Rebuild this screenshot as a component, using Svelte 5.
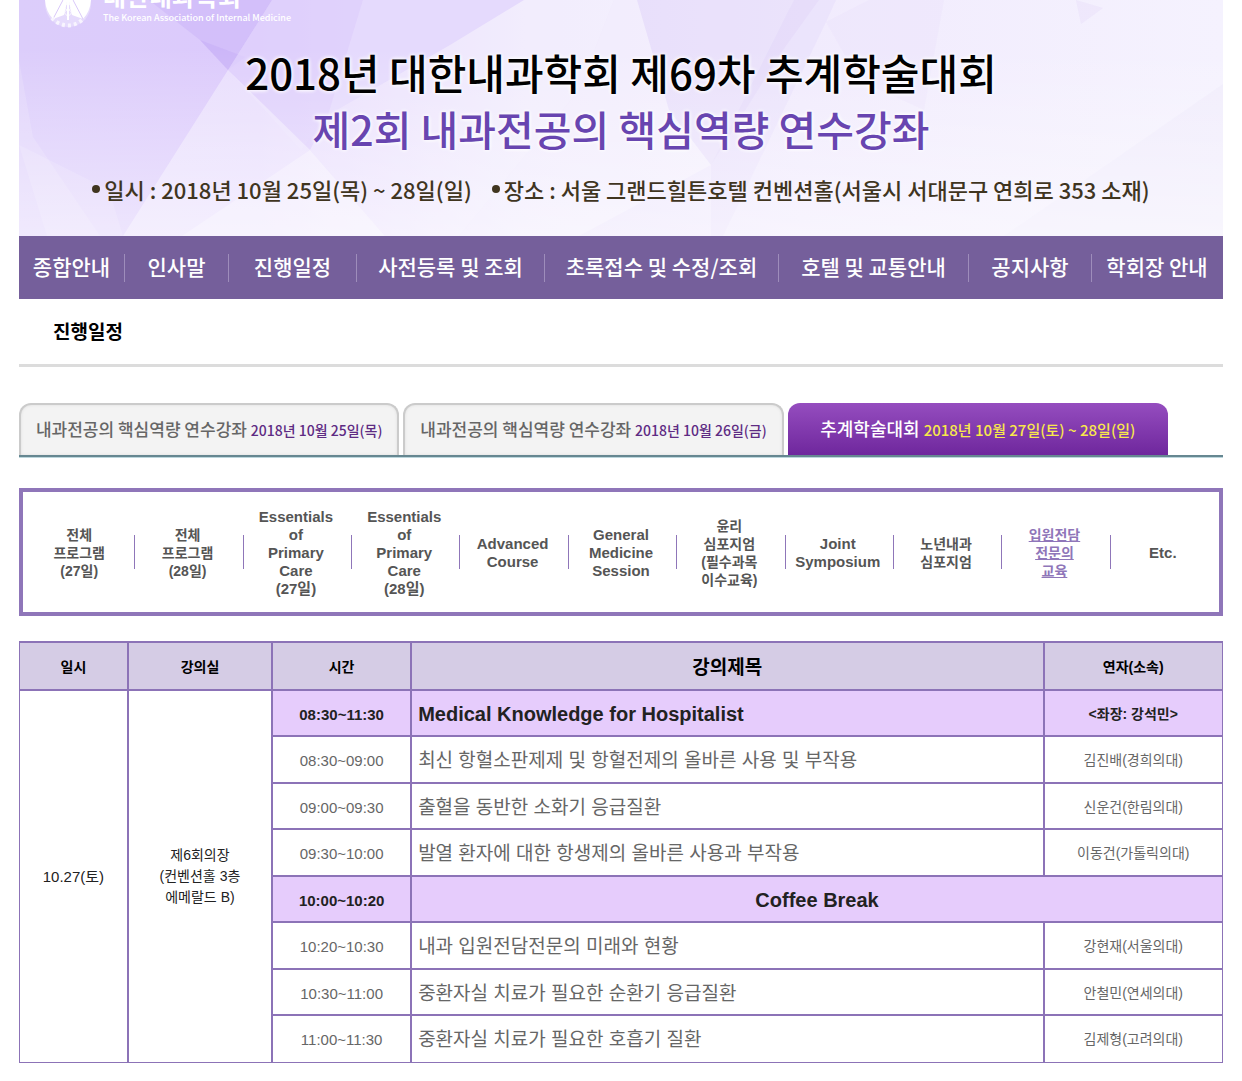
<script lang="ts">
  type Session = {
    time: string;
    title: string;
    speaker?: string;
    highlight?: boolean;
  };

  const menu = [
    '종합안내',
    '인사말',
    '진행일정',
    '사전등록 및 조회',
    '초록접수 및 수정/조회',
    '호텔 및 교통안내',
    '공지사항',
    '학회장 안내'
  ];

  const tabs = [
    { name: '내과전공의 핵심역량 연수강좌', date: '2018년 10월 25일(목)' },
    { name: '내과전공의 핵심역량 연수강좌', date: '2018년 10월 26일(금)' },
    { name: '추계학술대회', date: '2018년 10월 27일(토) ~ 28일(일)' }
  ];

  const programs = [
    { lines: ['전체', '프로그램', '(27일)'], korean: true },
    { lines: ['전체', '프로그램', '(28일)'], korean: true },
    { lines: ['Essentials', 'of', 'Primary', 'Care', '(27일)'] },
    { lines: ['Essentials', 'of', 'Primary', 'Care', '(28일)'] },
    { lines: ['Advanced', 'Course'] },
    { lines: ['General', 'Medicine', 'Session'] },
    { lines: ['윤리', '심포지엄', '(필수과목', '이수교육)'], korean: true },
    { lines: ['Joint', 'Symposium'] },
    { lines: ['노년내과', '심포지엄'], korean: true },
    { lines: ['입원전담', '전문의', '교육'], korean: true },
    { lines: ['Etc.'] }
  ];

  const sessions: Session[] = [
    { time: '08:30~11:30', title: 'Medical Knowledge for Hospitalist', speaker: '<좌장: 강석민>', highlight: true },
    { time: '08:30~09:00', title: '최신 항혈소판제제 및 항혈전제의 올바른 사용 및 부작용', speaker: '김진배(경희의대)' },
    { time: '09:00~09:30', title: '출혈을 동반한 소화기 응급질환', speaker: '신운건(한림의대)' },
    { time: '09:30~10:00', title: '발열 환자에 대한 항생제의 올바른 사용과 부작용', speaker: '이동건(가톨릭의대)' },
    { time: '10:00~10:20', title: 'Coffee Break', highlight: true },
    { time: '10:20~10:30', title: '내과 입원전담전문의 미래와 현황', speaker: '강현재(서울의대)' },
    { time: '10:30~11:00', title: '중환자실 치료가 필요한 순환기 응급질환', speaker: '안철민(연세의대)' },
    { time: '11:00~11:30', title: '중환자실 치료가 필요한 호흡기 질환', speaker: '김제형(고려의대)' }
  ];

  let activeTab = $state(2);
  let activeProgram = $state(9);
</script>

<div class="page">
  <header class="banner">
    <svg class="backdrop" viewBox="0 0 1204 236" preserveAspectRatio="none" aria-hidden="true">
      <defs>
        <linearGradient id="side" x1="0" y1="0" x2="1" y2="0">
          <stop offset="0" stop-color="#dccdfb" />
          <stop offset="0.2" stop-color="#dccafc" />
          <stop offset="0.42" stop-color="#ebe3fc" />
          <stop offset="0.65" stop-color="#f1ebfd" />
          <stop offset="1" stop-color="#f5f2fe" />
        </linearGradient>
        <linearGradient id="fade" x1="0" y1="0" x2="0" y2="1">
          <stop offset="0.2" stop-color="#fff" stop-opacity="0" />
          <stop offset="1" stop-color="#fff" stop-opacity="0.5" />
        </linearGradient>
      </defs>
      <rect width="1204" height="236" fill="url(#side)" />
      <path d="M130 0H253L209 70L181 40Z" fill="#c9b3f7" opacity="0.5" />
      <path d="M181 40L226 57L209 70Z" fill="#bca3f5" opacity="0.3" />
      <path d="M253 0H344L309 115L282 150L209 70Z" fill="#e0d1fc" opacity="0.7" />
      <path d="M344 0H505L431 45L309 115Z" fill="#e5dafd" />
      <path d="M209 70L104 236H366L291 150Z" fill="#fff" opacity="0.38" />
      <path d="M291 150L163 236H366Z" fill="#fff" opacity="0.3" />
      <path d="M309 115L431 45L505 0H595L560 90L440 236H366L291 150Z" fill="#fff" opacity="0.35" />
      <path d="M618 0H800L764 50L692 165L650 110Z" fill="#dfd0fa" opacity="0.3" />
      <path d="M595 0H618L650 110L692 165L560 236H440L560 90Z" fill="#fff" opacity="0.3" />
      <path d="M775 0H817L807 22L704 236H692V165Z" fill="#d6c7f8" opacity="0.2" />
      <path d="M807 22L850 0H925L905 110L840 80Z" fill="#e6dafc" opacity="0.25" />
      <path d="M1057 0L1084 8L1062 24Z" fill="#dfd1f8" opacity="0.25" />
      <path d="M1204 84L985 236H1204Z" fill="#ebe5fb" opacity="0.4" />
      <path d="M0 60L14 137L81 236H0Z" fill="#fff" opacity="0.15" />
      <path d="M0 145L90 190L104 236H28Z" fill="#fff" opacity="0.15" />
      <rect width="1204" height="236" fill="url(#fade)" />
    </svg>

    <div class="society">
      <svg class="emblem" viewBox="0 0 48 48" aria-hidden="true">
        <circle cx="24" cy="24" r="23" fill="#fff" opacity="0.3" />
        <path d="M1 20Q2 32 9 39L20 35L23 22V2Q5 4 1 20Z" fill="#fff" />
        <path d="M47 20Q46 32 39 39L28 35L25 22V2Q43 4 47 20Z" fill="#fff" />
        <path d="M9 39L19 20M39 39L29 20" stroke="#d9c8f9" fill="none" />
        <path d="M24 5V40" stroke="#fff" stroke-width="2" />
        <path
          d="M24 18C18 19 19 23 24 24S29 29 24 30S20 34 24 36M24 18C30 19 29 23 24 24S19 29 24 30S28 34 24 36"
          stroke="#fff"
          fill="none"
        />
        <path
          d="M8 38A21 21 0 0 0 40 38"
          stroke="#fff"
          stroke-width="4"
          stroke-dasharray="3 3"
          fill="none"
          opacity="0.7"
        />
      </svg>
      <div>
        <strong>대한내과학회</strong>
        <span>The Korean Association of Internal Medicine</span>
      </div>
    </div>

    <h1>2018년 대한내과학회 제69차 추계학술대회</h1>
    <p class="subtitle">제2회 내과전공의 핵심역량 연수강좌</p>
    <ul class="facts">
      <li>일시 : 2018년 10월 25일(목) ~ 28일(일)</li>
      <li>장소 : 서울 그랜드힐튼호텔 컨벤션홀(서울시 서대문구 연희로 353 소재)</li>
    </ul>
  </header>

  <nav class="menu">
    {#each menu as item, i}
      <a href="#menu-{i + 1}">{item}</a>
    {/each}
  </nav>

  <main>
    <h2>진행일정</h2>

    <div class="tabs">
      {#each tabs as tab, i}
        <button type="button" class:active={activeTab === i} onclick={() => (activeTab = i)}>
          {tab.name} <span>{tab.date}</span>
        </button>
      {/each}
    </div>

    <nav class="programs">
      {#each programs as program, i}
        <a
          href="#program-{i + 1}"
          class:korean={program.korean}
          class:current={activeProgram === i}
          onclick={() => (activeProgram = i)}
        >
          <span>
            {#each program.lines as line, n}{#if n > 0}<br />{/if}{line}{/each}
          </span>
        </a>
      {/each}
    </nav>

    <table>
      <colgroup>
        <col class="col-date" />
        <col class="col-room" />
        <col class="col-time" />
        <col />
        <col class="col-speaker" />
      </colgroup>
      <thead>
        <tr>
          <th>일시</th>
          <th>강의실</th>
          <th>시간</th>
          <th class="wide">강의제목</th>
          <th>연자(소속)</th>
        </tr>
      </thead>
      <tbody>
        {#each sessions as session, i}
          <tr class:highlight={session.highlight}>
            {#if i === 0}
              <td class="date" rowspan={sessions.length}>10.27(토)</td>
              <td class="room" rowspan={sessions.length}>제6회의장<br />(컨벤션홀 3층<br />에메랄드 B)</td>
            {/if}
            <td class="time">{session.time}</td>
            {#if session.speaker}
              <td class="title">{session.title}</td>
              <td class="speaker">{session.speaker}</td>
            {:else}
              <td class="title break" colspan="2">{session.title}</td>
            {/if}
          </tr>
        {/each}
      </tbody>
    </table>
  </main>
</div>

<style>
  :global(body) {
    background: #fff;
  }

  .page {
    padding: 0 19px 19px;
    font-family: 'Liberation Sans', 'Noto Sans CJK KR', sans-serif;
    color: #666;
  }

  a {
    color: inherit;
    text-decoration: none;
  }

  .banner,
  .menu,
  .tabs {
    font-family: 'Noto Sans CJK KR', sans-serif;
    font-weight: 500;
  }

  .banner {
    position: relative;
    overflow: hidden;
    padding: 43px 16px 33px;
    text-align: center;
  }

  .backdrop {
    position: absolute;
    inset: 0;
    width: 100%;
    height: 100%;
  }

  .society {
    position: absolute;
    top: -20px;
    left: 25px;
    display: flex;
    gap: 11px;
    color: #fff;
    text-align: left;
  }

  .emblem {
    width: 48px;
    height: 48px;
  }

  .society strong,
  .society span {
    display: block;
  }

  .society strong {
    font-size: 25px;
    line-height: 30px;
  }

  .society span {
    font-size: 9px;
    line-height: 16px;
  }

  h1,
  .subtitle {
    position: relative;
    margin: 0;
    font-size: 42px;
    font-weight: 500;
    line-height: 57px;
    color: #000;
    text-shadow: 0 0 4px #fff, 0 0 4px #fff;
  }

  .subtitle {
    font-size: 41px;
    color: #6845b0;
  }

  .facts {
    position: relative;
    display: flex;
    justify-content: center;
    gap: 20px;
    margin: 18px 0 0;
    padding: 0;
    list-style: none;
    font-size: 22px;
    line-height: 28px;
    color: #40351f;
  }

  .facts li {
    display: flex;
    align-items: center;
    gap: 4px;
  }

  .facts li::before {
    content: '';
    width: 8px;
    height: 8px;
    border-radius: 50%;
    background: #40351f;
  }

  .menu {
    box-sizing: border-box;
    display: grid;
    grid-template-columns: 106fr 104fr 128fr 188fr 234fr 190fr 123fr 131fr;
    align-items: center;
    height: 63px;
    background: #755f9b;
  }

  .menu a {
    padding-bottom: 4px;
    border-right: 1px solid #9e8dbb;
    font-size: 21px;
    line-height: 24px;
    color: #fff;
    text-align: center;
    white-space: nowrap;
  }

  .menu a:last-child {
    border-right-color: transparent;
  }

  h2 {
    margin: 0 0 36px;
    padding: 19px 34px 17px;
    border-bottom: 3px solid #dcdcdc;
    font-size: 19px;
    line-height: 29px;
    color: #000;
  }

  .tabs {
    display: grid;
    grid-template-columns: repeat(3, 1fr);
    gap: 4px;
    padding-right: 55px;
    border-bottom: 2px solid #668791;
    box-shadow: 0 1px 0 #bcd6dc;
  }

  .tabs button {
    height: 52px;
    padding: 0 0 4px;
    border: 2px solid #cbcbcb;
    border-bottom: 0;
    border-radius: 12px 12px 0 0;
    background: #f3f3f3;
    box-shadow: inset 0 0 3px #ddd;
    font: inherit;
    font-size: 17px;
    color: #666;
    white-space: nowrap;
    cursor: pointer;
  }

  .tabs span {
    font-size: 14px;
    color: #5e2b83;
  }

  .tabs .active {
    padding-bottom: 2px;
    border: 0;
    background: linear-gradient(#954dbf, #6f279d);
    box-shadow: none;
    font-size: 18px;
    color: #fff;
  }

  .tabs .active span {
    font-size: 15px;
    color: #f8e84a;
  }

  .programs {
    display: grid;
    grid-template-columns: repeat(11, 1fr);
    align-items: center;
    min-height: 120px;
    margin: 31px 0 25px;
    padding-left: 4px;
    border: 4px solid #8f76b9;
    font-size: 15px;
    font-weight: 700;
    line-height: 18px;
    color: #555;
    text-align: center;
  }

  .programs a {
    position: relative;
    padding: 2px 4px 0 0;
  }

  .programs a:not(:last-child)::after {
    content: '';
    position: absolute;
    top: 50%;
    right: 0;
    height: 34px;
    margin-top: -17px;
    border-right: 1px solid #8f76b9;
  }

  .programs .korean {
    font-size: 14px;
  }

  .programs .current {
    color: #8f76b9;
  }

  .programs .current span {
    text-decoration: underline;
  }

  table {
    width: 100%;
    border-collapse: collapse;
    table-layout: fixed;
    border-top: 2px solid #8c73b7;
  }

  .col-date {
    width: 9%;
  }

  .col-room {
    width: 12%;
  }

  .col-time {
    width: 139px;
  }

  .col-speaker {
    width: 179px;
  }

  th,
  td {
    box-sizing: border-box;
    height: 46px;
    padding: 2px 6px 0;
    border: 2px solid #8c73b7;
    line-height: 21px;
    text-align: center;
  }

  th:first-child,
  .date {
    border-left-width: 1px;
  }

  th:last-child,
  .speaker,
  .break {
    border-right-width: 1px;
  }

  tbody tr:nth-child(even) td {
    height: 47px;
  }

  tbody tr:last-child td,
  .date,
  .room {
    border-bottom-width: 1px;
  }

  th {
    height: 48px;
    background: #d5cce5;
    font-size: 14px;
    color: #000;
  }

  .wide {
    font-size: 19px;
  }

  .date,
  .time {
    font-size: 15px;
  }

  .date,
  .room {
    padding-top: 0;
    color: #222;
  }

  .room,
  .speaker {
    font-size: 14px;
  }

  .title {
    font-size: 19px;
    text-align: left;
  }

  .break {
    text-align: center;
  }

  .highlight .time,
  .highlight .title,
  .highlight .speaker {
    background: #e6ccfc;
    font-weight: 700;
    color: #222;
  }

  .highlight .title {
    font-size: 20px;
  }
</style>
